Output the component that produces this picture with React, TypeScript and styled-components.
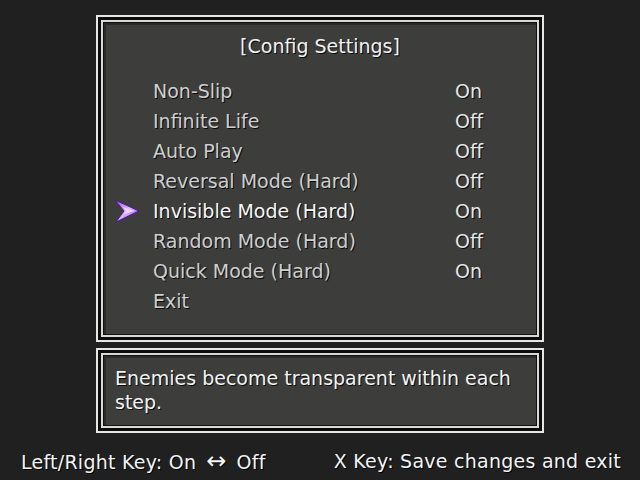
import React from 'react';
import styled, { createGlobalStyle } from 'styled-components';

const GlobalStyle = createGlobalStyle`
  html, body {
    margin: 0;
    padding: 0;
    background: #202020;
  }
  body {
    width: 640px;
    height: 480px;
    overflow: hidden;
    font-family: 'DejaVu Sans', 'Liberation Sans', sans-serif;
  }
`;

const Screen = styled.div`
  width: 640px;
  height: 480px;
  display: flex;
  flex-direction: column;
  align-items: center;
  padding-top: 15px;
  box-sizing: border-box;
  background: #202020;
`;

const Frame = styled.div<{ $height: number }>`
  width: 448px;
  height: ${(p) => p.$height}px;
  box-sizing: border-box;
  border: 2px solid #e6e6e6;
  background: #0c0c0c;
  padding: 3px;
  display: flex;
`;

const Inner = styled.div`
  flex: 1;
  box-sizing: border-box;
  border: 2px solid #d8d8d8;
  box-shadow: inset 0 0 0 1px #101010, inset 1px 1px 0 2px #2a2a2a;
  background: #3d3e3b;
  display: flex;
  flex-direction: column;
`;

const Title = styled.div`
  margin-top: 9px;
  height: 30px;
  line-height: 30px;
  text-align: center;
  color: #f2f2f2;
  font-size: 19px;
  text-shadow: 1px 1px 0 #0a0a0a;
`;

const Menu = styled.div`
  margin-top: 15px;
  padding-left: 14px;
  display: grid;
  grid-template-columns: 36px 302px auto;
  grid-auto-rows: 30px;
  align-items: center;
`;

const Label = styled.div<{ $active?: boolean }>`
  color: ${(p) => (p.$active ? '#f6f6f6' : '#cfcfcf')};
  font-size: 19px;
  text-shadow: 1px 1px 0 #0a0a0a;
  white-space: nowrap;
`;

const Value = styled(Label)`
  color: #e6e6e6;
`;

const CursorCell = styled.div`
  display: flex;
  align-items: center;
  margin-left: -4px;
`;

const Description = styled.div`
  margin-top: 6px;
`;

const DescText = styled.div`
  padding: 11px 0 0 12px;
  color: #f4f4f4;
  font-size: 19px;
  line-height: 24px;
  text-shadow: 1px 1px 0 #0a0a0a;
  width: 410px;
`;

const Footer = styled.div`
  width: 640px;
  box-sizing: border-box;
  display: flex;
  justify-content: space-between;
  padding: 0 19px 0 21px;
  margin-top: 15px;
  height: 26px;
  line-height: 26px;
  color: #f4f4f4;
  font-size: 19px;
  letter-spacing: 0.25px;
  text-shadow: 1px 1px 0 #000;
`;

const Arrow = styled.span`
  display: inline-block;
  font-size: 24px;
  margin: 0 10px;
`;

const Cursor = () => (
  <svg width="28" height="24" viewBox="0 0 28 24">
    <defs>
      <linearGradient id="cg" x1="0" y1="0" x2="1" y2="1">
        <stop offset="0" stopColor="#9a50e8" />
        <stop offset="0.5" stopColor="#e0b8ff" />
        <stop offset="1" stopColor="#6a28c0" />
      </linearGradient>
    </defs>
    <polygon points="2,1 26,12 3,23 11,12" fill="url(#cg)" stroke="#4a1a90" strokeWidth="1" />
    <polygon points="10,8 22,12 11,15 13,12" fill="#f0dcff" opacity="0.8" />
  </svg>
);

const items: { label: string; value: string }[] = [
  { label: 'Non-Slip', value: 'On' },
  { label: 'Infinite Life', value: 'Off' },
  { label: 'Auto Play', value: 'Off' },
  { label: 'Reversal Mode (Hard)', value: 'Off' },
  { label: 'Invisible Mode (Hard)', value: 'On' },
  { label: 'Random Mode (Hard)', value: 'Off' },
  { label: 'Quick Mode (Hard)', value: 'On' },
  { label: 'Exit', value: '' },
];

const selected = 4;

export default function App() {
  return (
    <Screen>
      <GlobalStyle />
      <Frame $height={327}>
        <Inner>
          <Title>[Config Settings]</Title>
          <Menu>
            {items.map((item, i) => (
              <React.Fragment key={item.label}>
                <CursorCell>{i === selected && <Cursor />}</CursorCell>
                <Label $active={i === selected}>{item.label}</Label>
                <Value>{item.value}</Value>
              </React.Fragment>
            ))}
          </Menu>
        </Inner>
      </Frame>
      <Description>
        <Frame $height={85}>
          <Inner>
            <DescText>Enemies become transparent within each step.</DescText>
          </Inner>
        </Frame>
      </Description>
      <Footer>
        <span>
          Left/Right Key: On<Arrow>↔</Arrow>Off
        </span>
        <span>X Key: Save changes and exit</span>
      </Footer>
    </Screen>
  );
}
